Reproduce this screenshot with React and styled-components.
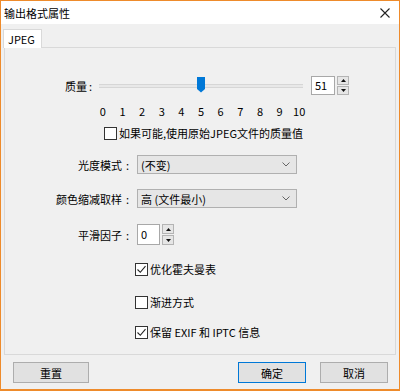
import React from "react";
import styled, { createGlobalStyle } from "styled-components";

const GlobalStyle = createGlobalStyle`
  html, body {
    margin: 0;
    padding: 0;
    background: #f0f0f0;
  }
  * {
    box-sizing: border-box;
  }
`;

const Window = styled.div`
  width: 400px;
  height: 391px;
  display: flex;
  flex-direction: column;
  border: 1px solid #ee8b2b;
  border-bottom-width: 2px;
  background: #f0f0f0;
  font-family: "Noto Sans CJK SC", "Noto Sans", sans-serif;
  font-size: 11px;
  color: #000;
`;

const TitleBar = styled.div`
  height: 23px;
  flex: none;
  display: flex;
  align-items: center;
  justify-content: space-between;
  padding: 0 9px 0 3px;
  background: #fff;
  font-size: 11px;
`;

const Body = styled.div`
  flex: none;
  display: flex;
  flex-direction: column;
  padding: 5px 3px 0 3px;
`;

const TabStrip = styled.div`
  display: flex;
  height: 18px;
  margin-left: -1px;
`;

const Tab = styled.div`
  width: 39px;
  height: 19px;
  padding: 3px 0 0 4px;
  line-height: 12px;
  border: 1px solid #d9d9d9;
  border-bottom: none;
  background: #fff;
  position: relative;
  z-index: 1;
`;

const Panel = styled.div`
  height: 308px;
  border: 1px solid #d9d9d9;
  background: #f0f0f0;
  display: flex;
  flex-direction: column;
  padding-top: 28px;
`;

const SliderRow = styled.div`
  display: flex;
  align-items: center;
  height: 19px;
  padding-left: 60px;
`;

const SliderLabel = styled.div`
  width: 34px;
`;

const Colon = styled.span`
  display: inline-block;
  width: ${(p) => p.$w}px;
  text-align: center;
`;

const Slider = styled.div`
  position: relative;
  width: 204px;
  height: 19px;
  display: flex;
  align-items: center;
`;

const Track = styled.div`
  width: 100%;
  height: 4px;
  border-top: 1px solid #d6d6d6;
  border-bottom: 1px solid #d6d6d6;
  background: #e8e8e8;
`;

const Thumb = styled.svg`
  position: absolute;
  top: 1px;
  margin-left: -4px;
`;

const SpinGroup = styled.div`
  display: flex;
  align-items: stretch;
  margin-left: ${(p) => p.$offset || 0}px;
  height: ${(p) => p.$h}px;
`;

const SpinInput = styled.div`
  width: ${(p) => p.$w}px;
  border: 1px solid #a8a8a8;
  background: #fff;
  padding: 0 0 0 3px;
  display: flex;
  align-items: center;
  line-height: 1;
`;

const SpinButtons = styled.div`
  display: flex;
  flex-direction: column;
  justify-content: space-between;
  margin-left: 2px;
  width: 12px;
`;

const SpinButton = styled.div`
  height: ${(p) => p.$h}px;
  border: 1px solid #b4b4b4;
  background: #e6e6e6;
  display: flex;
  align-items: center;
  justify-content: center;
`;

const Ticks = styled.div`
  display: flex;
  width: 216px;
  height: 14px;
  margin: 9px 0 0 88px;
  line-height: 14px;
`;

const Tick = styled.span`
  flex: 1;
  text-align: center;
`;

const CheckRow = styled.label`
  display: flex;
  align-items: center;
  gap: 2px;
  height: 14px;
  line-height: 14px;
  padding-left: ${(p) => p.$indent}px;
  margin-top: ${(p) => p.$top}px;
`;

const Box = styled.span`
  width: 13px;
  height: 13px;
  flex: none;
  border: 1px solid #333;
  background: #fff;
  display: flex;
  align-items: center;
  justify-content: center;
`;

const FormRow = styled.div`
  display: grid;
  grid-template-columns: 128px auto;
  column-gap: 4px;
  align-items: center;
  height: ${(p) => p.$h}px;
  margin-top: ${(p) => p.$top}px;
`;

const FieldLabel = styled.div`
  text-align: right;
`;

const Select = styled.div`
  width: 160px;
  height: 19px;
  border: 1px solid #b0b0b0;
  background: #e6e6e6;
  display: flex;
  align-items: center;
  justify-content: space-between;
  padding: 0 6px 0 3px;
`;

const Footer = styled.div`
  flex: 1;
  display: flex;
  align-items: flex-start;
  padding: 7px 11px 0 12px;
  gap: 14px;
`;

const Spacer = styled.div`
  flex: 1;
`;

const Button = styled.button`
  width: ${(p) => p.$w}px;
  height: 21px;
  padding: 0;
  border: 1px solid ${(p) => (p.$primary ? "#0078d7" : "#adadad")};
  background: #e1e1e1;
  font-family: inherit;
  font-size: 11px;
  color: #000;
`;

const CheckMark = () => (
  <svg width="11" height="11" viewBox="0 0 11 11">
    <path d="M1.5 5.5 L4.3 8.3 L9.5 2.2" fill="none" stroke="#222" strokeWidth="1.1" />
  </svg>
);

const Arrow = ({ up }) => (
  <svg width="5" height="3" viewBox="0 0 5 3">
    <path d={up ? "M0 3 L2.5 0 L5 3 Z" : "M0 0 L2.5 3 L5 0 Z"} fill="#111" />
  </svg>
);

const Spin = ({ value, w, h, offset }) => (
  <SpinGroup $h={h} $offset={offset}>
    <SpinInput $w={w}>{value}</SpinInput>
    <SpinButtons>
      <SpinButton $h={Math.floor(h / 2)}>
        <Arrow up />
      </SpinButton>
      <SpinButton $h={Math.floor(h / 2)}>
        <Arrow />
      </SpinButton>
    </SpinButtons>
  </SpinGroup>
);

const Check = ({ checked, children, indent, top }) => (
  <CheckRow $indent={indent} $top={top}>
    <Box>{checked && <CheckMark />}</Box>
    <span>{children}</span>
  </CheckRow>
);

const Chevron = () => (
  <svg width="8" height="5" viewBox="0 0 8 5">
    <path d="M0.5 0.5 L4 4 L7.5 0.5" fill="none" stroke="#666" strokeWidth="1" />
  </svg>
);

const Label = ({ text }) => (
  <FieldLabel>
    {text}
    <Colon $w={11}>:</Colon>
  </FieldLabel>
);

const quality = 5;

export default function App() {
  return (
    <>
      <GlobalStyle />
      <Window>
        <TitleBar>
          <span>输出格式属性</span>
          <svg width="10" height="10" viewBox="0 0 10 10">
            <path d="M0.5 0.5 L9.5 9.5 M9.5 0.5 L0.5 9.5" stroke="#222" strokeWidth="1.1" />
          </svg>
        </TitleBar>
        <Body>
          <TabStrip>
            <Tab>JPEG</Tab>
          </TabStrip>
          <Panel>
            <SliderRow>
              <SliderLabel>
                质量<Colon $w={7}>:</Colon>
              </SliderLabel>
              <Slider>
                <Track />
                <Thumb
                  width="8"
                  height="16"
                  viewBox="0 0 8 16"
                  style={{ left: `${quality * 10}%` }}
                >
                  <path d="M0 0 H8 V12 L4 15.5 L0 12 Z" fill="#0078d7" />
                </Thumb>
              </Slider>
              <Spin value="51" w={24} h={19} offset={8} />
            </SliderRow>
            <Ticks>
              {[0, 1, 2, 3, 4, 5, 6, 7, 8, 9, 10].map((n) => (
                <Tick key={n}>{n}</Tick>
              ))}
            </Ticks>
            <Check indent={99} top={8}>
              如果可能,使用原始JPEG文件的质量值
            </Check>
            <FormRow $h={19} $top={15}>
              <Label text="光度模式" />
              <Select>
                <span>(不变)</span>
                <Chevron />
              </Select>
            </FormRow>
            <FormRow $h={19} $top={15}>
              <Label text="颜色缩减取样" />
              <Select>
                <span>高 (文件最小)</span>
                <Chevron />
              </Select>
            </FormRow>
            <FormRow $h={21} $top={16}>
              <Label text="平滑因子" />
              <Spin value="0" w={23} h={21} />
            </FormRow>
            <Check checked indent={130} top={17}>
              优化霍夫曼表
            </Check>
            <Check indent={130} top={19}>
              渐进方式
            </Check>
            <Check checked indent={130} top={16}>
              保留 EXIF 和 IPTC 信息
            </Check>
          </Panel>
        </Body>
        <Footer>
          <Button $w={76}>重置</Button>
          <Spacer />
          <Button $w={68} $primary>
            确定
          </Button>
          <Button $w={68}>取消</Button>
        </Footer>
      </Window>
    </>
  );
}
